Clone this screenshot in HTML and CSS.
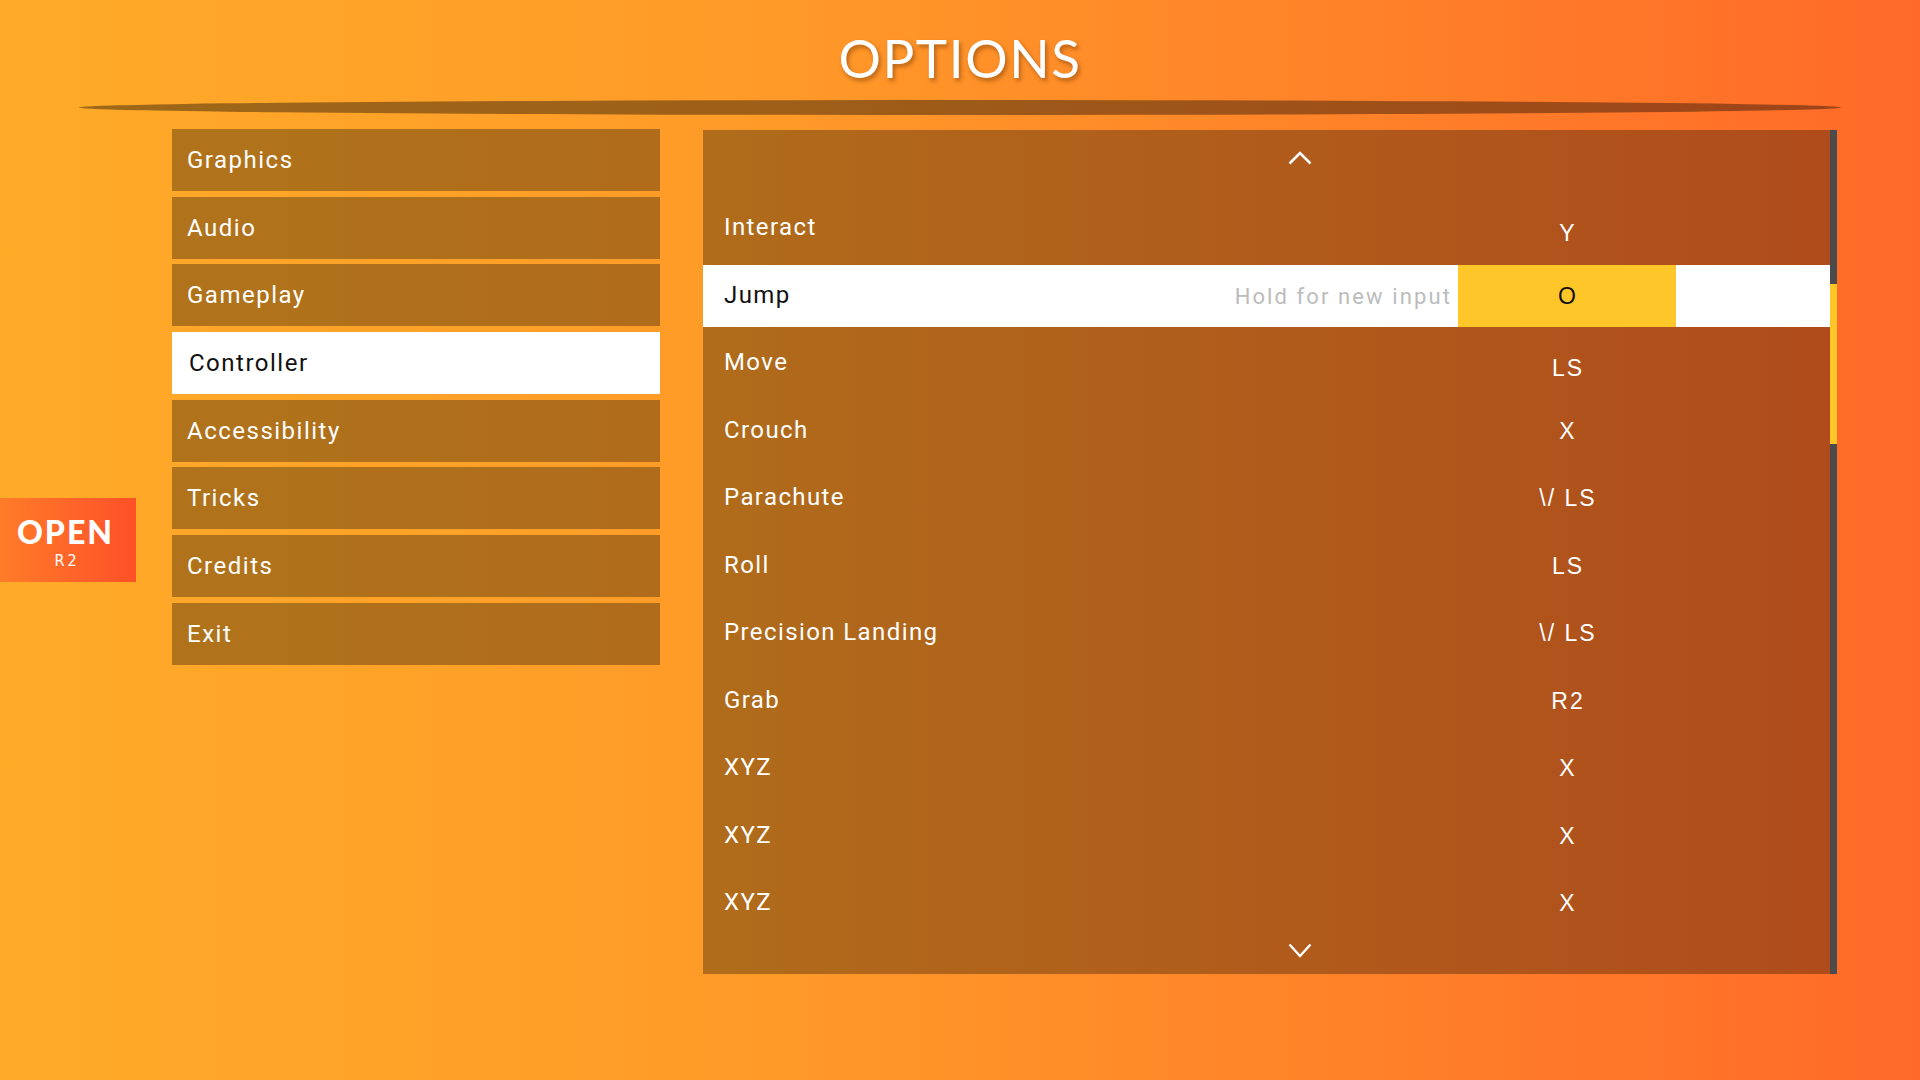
FILE: index.html
```html
<!DOCTYPE html>
<html lang="en">
<head>
<meta charset="utf-8">
<title>Options</title>
<link rel="stylesheet" href="styles.css">
</head>
<body>
<header class="header">
  <h1 class="title">OPTIONS</h1>
  <div class="lens"></div>
</header>

<div class="side-tab">
  <span class="side-tab-main">OPEN</span>
  <span class="side-tab-sub">R2</span>
</div>

<main class="main">
  <nav class="menu">
    <div class="menu-item">Graphics</div>
    <div class="menu-item">Audio</div>
    <div class="menu-item">Gameplay</div>
    <div class="menu-item active">Controller</div>
    <div class="menu-item">Accessibility</div>
    <div class="menu-item">Tricks</div>
    <div class="menu-item">Credits</div>
    <div class="menu-item">Exit</div>
  </nav>

  <section class="panel">
    <div class="panel-content">
      <div class="chev chev-up">
        <svg width="24" height="14" viewBox="0 0 24 14"><polyline points="1.5,12.5 12,2 22.5,12.5" fill="none" stroke="#fff" stroke-width="2.6"/></svg>
      </div>
      <div class="rows">
        <div class="row"><span class="label">Interact</span><span class="val low">Y</span><span class="spacer"></span></div>
        <div class="row selected"><span class="label">Jump</span><span class="hint">Hold for new input</span><span class="val">O</span><span class="spacer"></span></div>
        <div class="row"><span class="label">Move</span><span class="val low">LS</span><span class="spacer"></span></div>
        <div class="row"><span class="label">Crouch</span><span class="val">X</span><span class="spacer"></span></div>
        <div class="row"><span class="label">Parachute</span><span class="val">\/ LS</span><span class="spacer"></span></div>
        <div class="row"><span class="label">Roll</span><span class="val">LS</span><span class="spacer"></span></div>
        <div class="row"><span class="label">Precision Landing</span><span class="val">\/ LS</span><span class="spacer"></span></div>
        <div class="row"><span class="label">Grab</span><span class="val">R2</span><span class="spacer"></span></div>
        <div class="row"><span class="label">XYZ</span><span class="val">X</span><span class="spacer"></span></div>
        <div class="row"><span class="label">XYZ</span><span class="val">X</span><span class="spacer"></span></div>
        <div class="row"><span class="label">XYZ</span><span class="val">X</span><span class="spacer"></span></div>
      </div>
      <div class="chev chev-down">
        <svg width="24" height="15" viewBox="0 0 24 15"><polyline points="1.5,1.5 12,13 22.5,1.5" fill="none" stroke="#fff" stroke-width="2.4"/></svg>
      </div>
    </div>
    <div class="scrollbar"><div class="thumb"></div></div>
  </section>
</main>
</body>
</html>
```

FILE: styles.css
```css
* { box-sizing: border-box; }

html, body {
  margin: 0;
  padding: 0;
}

body {
  width: 1920px;
  height: 1080px;
  overflow: hidden;
  position: relative;
  background: linear-gradient(90deg, #ffab28 0%, #ff9a28 40%, #ff6a29 100%);
  font-family: Roboto, "Liberation Sans", sans-serif;
  color: #fff;
}

.header {
  padding-top: 31px;
}

.title {
  margin: 0;
  height: 53px;
  line-height: 53px;
  font-family: Lato, "Open Sans", sans-serif;
  font-weight: 400;
  font-size: 53px;
  letter-spacing: 1.6px;
  text-align: center;
  color: #fff;
  text-shadow: 2px 3px 4px rgba(90, 40, 0, 0.45);
}

.lens {
  width: 1762px;
  height: 15px;
  margin: 16px auto 0;
  border-radius: 50%;
  background: rgba(0, 0, 0, 0.38);
}

.side-tab {
  position: absolute;
  left: 0;
  top: 498px;
  width: 136px;
  height: 84px;
  background: linear-gradient(90deg, #ff7c29, #ff5028);
  display: flex;
  flex-direction: column;
  align-items: center;
  padding-top: 17px;
  padding-right: 5px;
}

.side-tab-main {
  font-family: Lato, "Open Sans", sans-serif;
  font-weight: 900;
  font-size: 32px;
  line-height: 34px;
  letter-spacing: 2px;
}

.side-tab-sub {
  margin-top: 3px;
  font-family: "DejaVu Sans Condensed", Roboto, sans-serif;
  font-size: 16px;
  line-height: 18px;
  letter-spacing: 3px;
  padding-left: 3px;
}

.main {
  display: flex;
  align-items: flex-start;
  margin-top: 14px;
  padding-left: 172px;
  gap: 43px;
}

.menu {
  width: 488px;
  display: flex;
  flex-direction: column;
  gap: 5.7px;
}

.menu-item {
  height: 62px;
  display: flex;
  align-items: center;
  padding-left: 15px;
  background: rgba(0, 0, 0, 0.31);
  font-size: 24px;
  letter-spacing: 1.5px;
  color: #fff;
}

.menu-item.active {
  background: #fff;
  color: #111;
  padding-left: 17px;
}

.panel {
  margin-top: 1px;
  width: 1134px;
  height: 844px;
  display: flex;
}

.panel-content {
  width: 1127px;
  height: 100%;
  background: rgba(0, 0, 0, 0.31);
  display: flex;
  flex-direction: column;
}

.chev {
  display: flex;
  justify-content: center;
  padding-left: 66px;
}

.chev-up {
  height: 55px;
  align-items: center;
}

.chev-down {
  padding-top: 8px;
}

.chev svg { display: block; }

.rows {
  margin-top: 12.5px;
  display: flex;
  flex-direction: column;
  gap: 5.5px;
}

.row {
  height: 62px;
  display: flex;
  align-items: stretch;
  font-size: 24px;
  letter-spacing: 1.4px;
}

.label {
  flex: 1;
  display: flex;
  align-items: center;
  padding-left: 21px;
  padding-bottom: 3px;
}

.hint {
  display: flex;
  align-items: center;
  margin-right: 6px;
  font-size: 22px;
  letter-spacing: 2.1px;
  color: #bcbcbc;
}

.val {
  width: 218px;
  display: flex;
  align-items: center;
  justify-content: center;
  font-family: "Liberation Sans", Arial, sans-serif;
  font-size: 23px;
  letter-spacing: 2px;
  padding-left: 2px;
}

.val.low {
  padding-top: 10px;
}

.spacer {
  width: 154px;
}

.row.selected {
  background: #fff;
  color: #111;
}

.row.selected .val {
  background: #ffc629;
  color: #111;
}

.scrollbar {
  width: 7px;
  height: 100%;
  background: #4b4b4b;
}

.thumb {
  margin-top: 154px;
  height: 160px;
  background: #ffc629;
}
```
